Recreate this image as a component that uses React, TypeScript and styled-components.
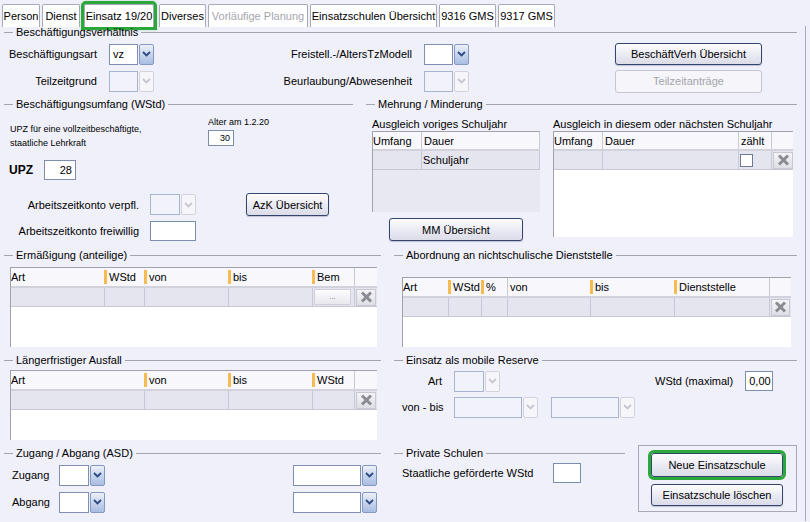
import React from "react";
import styled, { createGlobalStyle, css } from "styled-components";

const GlobalStyle = createGlobalStyle`
  html, body { margin: 0; padding: 0; background: #f0f0fa; }
  body { font-family: "Liberation Sans", Arial, sans-serif; font-size: 11px; color: #000; }
  * { box-sizing: border-box; }
`;

const Window = styled.div`
  width: 810px;
  height: 522px;
  overflow: hidden;
  background: #f0f0fa;
`;

/* ---------- tabs ---------- */

const TabBar = styled.div`
  display: flex;
  align-items: flex-end;
  gap: 2px;
  height: 27px;
  padding: 4px 0 0 2px;
`;

const Tab = styled.div<{ $w: number; $active?: boolean; $disabled?: boolean }>`
  width: ${(p) => p.$w}px;
  height: 23px;
  flex-shrink: 0;
  display: flex;
  align-items: center;
  justify-content: center;
  white-space: nowrap;
  background: #fff;
  border: 1px solid #a9a9b8;
  border-bottom: none;
  border-radius: 2px 2px 0 0;
  color: ${(p) => (p.$disabled ? "#a6a6ae" : "#000")};
  ${(p) =>
    p.$active &&
    css`
      margin: 0 3px 0 2px;
      outline: 3px solid #2aa83a;
      box-shadow: 0 0 3px 3px rgba(40, 160, 60, 0.25);
    `}
`;

/* ---------- panel & groups ---------- */

const Panel = styled.div`
  width: 806px;
  height: 495px;
  border-right: 1px solid #a9a9b8;
  padding: 0 8px 0 4px;
`;

const Section = styled.section<{ $mt?: number; $w?: number }>`
  margin-top: ${(p) => p.$mt ?? 0}px;
  ${(p) => (p.$w ? `width: ${p.$w}px; flex-shrink: 0;` : "flex: 1;")}
`;

const GroupHead = styled.div<{ $mt?: number }>`
  display: flex;
  align-items: center;
  gap: 3px;
  height: 12px;
  line-height: 12px;
  margin-top: ${(p) => p.$mt ?? 0}px;
  white-space: nowrap;
  &::before {
    content: "";
    width: 9px;
    height: 1px;
    background: #a4a4ae;
  }
  &::after {
    content: "";
    flex: 1;
    height: 1px;
    background: #a4a4ae;
  }
`;

const Label = styled.span<{ $right?: boolean }>`
  white-space: nowrap;
  text-align: ${(p) => (p.$right ? "right" : "left")};
`;

/* ---------- controls ---------- */

const ComboWrap = styled.div`
  display: flex;
  gap: 1px;
  height: 21px;
`;

const ComboBox = styled.div<{ $w: number; $disabled?: boolean }>`
  width: ${(p) => p.$w}px;
  height: 100%;
  display: flex;
  align-items: center;
  padding-left: 3px;
  background: ${(p) => (p.$disabled ? "#f2f2fb" : "#fff")};
  border: 1px solid ${(p) => (p.$disabled ? "#a9b5cf" : "#7f8eb2")};
`;

const ComboBtn = styled.div<{ $disabled?: boolean }>`
  width: 15px;
  height: 100%;
  display: flex;
  align-items: center;
  justify-content: center;
  border-radius: 2px;
  border: 1px solid ${(p) => (p.$disabled ? "#d2d2dc" : "#8399c4")};
  background: ${(p) =>
    p.$disabled ? "#f6f6fa" : "linear-gradient(#edf1fa, #c4d2ec 55%, #aabee3)"};
`;

function Combo({ w, value, disabled }: { w: number; value?: string; disabled?: boolean }) {
  return (
    <ComboWrap>
      <ComboBox $w={w} $disabled={disabled}>{value}</ComboBox>
      <ComboBtn $disabled={disabled}>
        <svg width="9" height="6" viewBox="0 0 9 6">
          <path
            d="M1 1 L4.5 4.5 L8 1"
            fill="none"
            stroke={disabled ? "#c6c6d0" : "#2b4a82"}
            strokeWidth="1.8"
          />
        </svg>
      </ComboBtn>
    </ComboWrap>
  );
}

const Field = styled.div<{ $w: number; $h: number; $right?: boolean }>`
  width: ${(p) => p.$w}px;
  height: ${(p) => p.$h}px;
  display: flex;
  align-items: center;
  justify-content: ${(p) => (p.$right ? "flex-end" : "flex-start")};
  padding: 0 3px;
  background: #fff;
  border: 1px solid #7d8db0;
`;

const Btn = styled.button<{ $w: number; $h: number; $marked?: boolean }>`
  width: ${(p) => p.$w}px;
  height: ${(p) => p.$h}px;
  padding: 0;
  font-family: inherit;
  font-size: 11px;
  color: #000;
  border: 1px solid #34446c;
  border-radius: 3px;
  background: linear-gradient(#fdfdff, #ebebf4 50%, #dcdce8);
  box-shadow: 0 1px 1px rgba(40, 50, 90, 0.25);
  &:disabled {
    color: #a4a4ac;
    border-color: #c6c6d2;
    background: #f5f5fa;
    box-shadow: none;
  }
  ${(p) =>
    p.$marked &&
    css`
      outline: 3px solid #2aa83a;
      outline-offset: 0;
    `}
`;

const XBtn = styled.div`
  width: 20px;
  height: 17px;
  display: flex;
  align-items: center;
  justify-content: center;
  border: 1px solid #c8c8d2;
  background: linear-gradient(#f4f4f8, #dedee6);
`;

function XButton() {
  return (
    <XBtn>
      <svg width="13" height="12" viewBox="0 0 13 12">
        <path d="M2 1.5 L11 10.5 M11 1.5 L2 10.5" stroke="#8b8b93" strokeWidth="3" />
      </svg>
    </XBtn>
  );
}

const DotsBtn = styled.div`
  width: 37px;
  height: 16px;
  display: flex;
  align-items: flex-end;
  justify-content: center;
  padding-bottom: 3px;
  font-size: 8px;
  color: #777;
  border: 1px solid #cfcfd8;
  background: linear-gradient(#fcfcfe, #e8e8ee);
`;

const Check = styled.div`
  width: 13px;
  height: 13px;
  background: #fff;
  border: 1px solid #6c7b9a;
`;

/* ---------- tables ---------- */

type Col = { label: string; w: number; sep?: "o" | "g" };

const TableBox = styled.div<{ $w: number; $h: number; $grey?: boolean }>`
  width: ${(p) => p.$w}px;
  height: ${(p) => p.$h}px;
  overflow: hidden;
  border-top: 1px solid #a2a2ac;
  border-left: 1px solid #a2a2ac;
  background: ${(p) => (p.$grey ? "#e8e8f0" : "#fff")};
`;

const HeadRow = styled.div<{ $h: number }>`
  display: flex;
  height: ${(p) => p.$h}px;
  background: #f7f7fc;
  border-bottom: 2px solid #d2d2dc;
`;

const HeadCell = styled.div<{ $w: number }>`
  width: ${(p) => p.$w}px;
  flex-shrink: 0;
  display: flex;
  align-items: center;
  white-space: nowrap;
  overflow: hidden;
`;

const Sep = styled.span<{ $kind: "o" | "g" }>`
  flex-shrink: 0;
  margin-right: 2px;
  ${(p) =>
    p.$kind === "o"
      ? css`
          width: 3px;
          height: 14px;
          background: #f7bb52;
        `
      : css`
          width: 1px;
          height: 100%;
          background: #cacad4;
        `}
`;

const DataRow = styled.div`
  display: flex;
  height: 19px;
  background: #e5e5ef;
  border-bottom: 1px solid #c8c8d4;
`;

const DataCell = styled.div<{ $w: number; $first?: boolean }>`
  width: ${(p) => p.$w}px;
  flex-shrink: 0;
  display: flex;
  align-items: center;
  padding-left: 1px;
  border-left: ${(p) => (p.$first ? "none" : "1px solid #c8c8d4")};
`;

function DataTable({
  cols,
  row,
  width,
  height,
  head = 20,
  grey,
}: {
  cols: Col[];
  row: React.ReactNode[];
  width: number;
  height: number;
  head?: number;
  grey?: boolean;
}) {
  return (
    <TableBox $w={width} $h={height} $grey={grey}>
      <HeadRow $h={head}>
        {cols.map((c, i) => (
          <HeadCell key={i} $w={c.w}>
            {c.sep && <Sep $kind={c.sep} />}
            {c.label}
          </HeadCell>
        ))}
      </HeadRow>
      <DataRow>
        {cols.map((c, i) => (
          <DataCell key={i} $w={c.w} $first={i === 0}>
            {row[i]}
          </DataCell>
        ))}
      </DataRow>
    </TableBox>
  );
}

/* ---------- section layouts ---------- */

const TopGrid = styled.div`
  display: grid;
  grid-template-columns: 93px 45px 246px 45px 122px 147px;
  grid-auto-rows: 22px;
  column-gap: 12px;
  row-gap: 5px;
  align-items: center;
  margin-top: 5px;
`;

const MidRow = styled.div`
  display: flex;
  gap: 13px;
  margin-top: 6px;
`;

const InfoRow = styled.div`
  display: flex;
  margin-top: 6px;
`;

const SmallNote = styled.div`
  width: 198px;
  margin: 6px 0 0 6px;
  font-size: 9px;
  line-height: 14px;
`;

const AgeBlock = styled.div`
  display: flex;
  flex-direction: column;
  gap: 2px;
  font-size: 9px;
  line-height: 12px;
`;

const UpzRow = styled.div`
  display: flex;
  align-items: center;
  margin-top: 10px;
  padding-left: 5px;
`;

const UpzLabel = styled.span`
  width: 35px;
  font-size: 12px;
  font-weight: bold;
`;

const AzkGrid = styled.div`
  display: grid;
  grid-template-columns: 135px 85px 83px;
  grid-template-rows: 23px 20px;
  column-gap: 11px;
  row-gap: 5px;
  align-items: center;
  margin-top: 13px;
`;

const SubCols = styled.div`
  display: flex;
  gap: 13px;
  margin-top: 8px;
  padding-left: 6px;
`;

const SubCol = styled.div<{ $w: number }>`
  width: ${(p) => p.$w}px;
  display: flex;
  flex-direction: column;
  align-items: center;
`;

const SubHead = styled.div`
  align-self: flex-start;
  line-height: 12px;
  margin-bottom: 1px;
  white-space: nowrap;
`;

const Pair = styled.div<{ $mt: number }>`
  display: grid;
  grid-template-columns: 377px 403px;
  column-gap: 13px;
  margin-top: ${(p) => p.$mt}px;
`;

const TableSlot = styled.div<{ $mt: number; $pl: number }>`
  margin-top: ${(p) => p.$mt}px;
  padding-left: ${(p) => p.$pl}px;
`;

const ReserveGrid = styled.div`
  display: grid;
  grid-template-columns: 40px 1fr;
  grid-auto-rows: 20px;
  column-gap: 12px;
  row-gap: 6px;
  align-items: center;
  margin-top: 5px;
  padding-left: 8px;
`;

const Line = styled.div<{ $gap: number }>`
  display: flex;
  align-items: center;
  gap: ${(p) => p.$gap}px;
`;

const Push = styled.span<{ $ml: number }>`
  margin-left: ${(p) => p.$ml}px;
  white-space: nowrap;
`;

const AsdGrid = styled.div`
  display: grid;
  grid-template-columns: 47px 234px 84px;
  grid-auto-rows: 20px;
  row-gap: 7px;
  align-items: center;
  margin-top: 6px;
  padding-left: 8px;
`;

const BottomRight = styled.div`
  display: flex;
  gap: 13px;
`;

const PrivRow = styled.div`
  display: flex;
  align-items: center;
  margin-top: 4px;
  padding-left: 8px;
`;

const ActionBox = styled.div`
  width: 159px;
  height: 67px;
  flex-shrink: 0;
  display: flex;
  flex-direction: column;
  gap: 7px;
  padding: 7px 0 0 12px;
  border: 1px solid #a8a8b4;
`;

/* ---------- data ---------- */

const tabs = [
  { label: "Person", w: 38 },
  { label: "Dienst", w: 38 },
  { label: "Einsatz 19/20", w: 70, active: true },
  { label: "Diverses", w: 47 },
  { label: "Vorläufige Planung", w: 100, disabled: true },
  { label: "Einsatzschulen Übersicht", w: 127 },
  { label: "9316 GMS", w: 57 },
  { label: "9317 GMS", w: 57 },
];

const ermCols: Col[] = [
  { label: "Art", w: 93 },
  { label: "WStd", w: 40, sep: "o" },
  { label: "von", w: 84, sep: "o" },
  { label: "bis", w: 84, sep: "o" },
  { label: "Bem", w: 42, sep: "o" },
  { label: "", w: 22, sep: "g" },
];

const abordCols: Col[] = [
  { label: "Art", w: 45 },
  { label: "WStd", w: 33, sep: "o" },
  { label: "%", w: 26, sep: "o" },
  { label: "von", w: 83, sep: "g" },
  { label: "bis", w: 84, sep: "o" },
  { label: "Dienststelle", w: 95, sep: "o" },
  { label: "", w: 21, sep: "g" },
];

const ausfallCols: Col[] = [
  { label: "Art", w: 133 },
  { label: "von", w: 84, sep: "o" },
  { label: "bis", w: 84, sep: "o" },
  { label: "WStd", w: 42, sep: "o" },
  { label: "", w: 22, sep: "g" },
];

const voriges: Col[] = [
  { label: "Umfang", w: 48 },
  { label: "Dauer", w: 118, sep: "g" },
  { label: "", w: 1, sep: "g" },
];

const naechstes: Col[] = [
  { label: "Umfang", w: 48 },
  { label: "Dauer", w: 136, sep: "g" },
  { label: "zählt", w: 33, sep: "g" },
  { label: "", w: 22, sep: "g" },
];

export default function App() {
  return (
    <Window>
      <GlobalStyle />
      <TabBar>
        {tabs.map((t) => (
          <Tab key={t.label} $w={t.w} $active={t.active} $disabled={t.disabled}>
            {t.label}
          </Tab>
        ))}
      </TabBar>

      <Panel>
        {/* Beschäftigungsverhältnis */}
        <Section $mt={-1}>
          <GroupHead>Beschäftigungsverhältnis</GroupHead>
          <TopGrid>
            <Label $right>Beschäftigungsart</Label>
            <Combo w={30} value="vz" />
            <Label $right>Freistell.-/AltersTzModell</Label>
            <Combo w={30} />
            <span />
            <Btn $w={147} $h={22}>BeschäftVerh Übersicht</Btn>

            <Label $right>Teilzeitgrund</Label>
            <Combo w={30} disabled />
            <Label $right>Beurlaubung/Abwesenheit</Label>
            <Combo w={30} disabled />
            <span />
            <Btn $w={147} $h={23} disabled>Teilzeitanträge</Btn>
          </TopGrid>
        </Section>

        <MidRow>
          {/* Beschäftigungsumfang */}
          <Section $w={349}>
            <GroupHead>Beschäftigungsumfang (WStd)</GroupHead>
            <InfoRow>
              <SmallNote>
                UPZ für eine vollzeitbeschäftigte,
                <br />
                staatliche Lehrkraft
              </SmallNote>
              <AgeBlock>
                <span>Alter am 1.2.20</span>
                <Field $w={26} $h={16} $right>30</Field>
              </AgeBlock>
            </InfoRow>
            <UpzRow>
              <UpzLabel>UPZ</UpzLabel>
              <Field $w={32} $h={20} $right>28</Field>
            </UpzRow>
            <AzkGrid>
              <Label $right>Arbeitszeitkonto verpfl.</Label>
              <Combo w={30} disabled />
              <Btn $w={83} $h={23}>AzK Übersicht</Btn>
              <Label $right>Arbeitszeitkonto freiwillig</Label>
              <Field $w={46} $h={20} />
              <span />
            </AzkGrid>
          </Section>

          {/* Mehrung / Minderung */}
          <Section>
            <GroupHead>Mehrung / Minderung</GroupHead>
            <SubCols>
              <SubCol $w={168}>
                <SubHead>Ausgleich voriges Schuljahr</SubHead>
                <DataTable
                  cols={voriges}
                  row={[null, "Schuljahr", null]}
                  width={168}
                  height={81}
                  head={19}
                  grey
                />
                <Btn $w={134} $h={23} style={{ marginTop: 6 }}>MM Übersicht</Btn>
              </SubCol>
              <SubCol $w={240}>
                <SubHead>Ausgleich in diesem oder nächsten Schuljahr</SubHead>
                <DataTable
                  cols={naechstes}
                  row={[null, null, <Check key="c" />, <XButton key="x" />]}
                  width={240}
                  height={106}
                  head={19}
                />
              </SubCol>
            </SubCols>
          </Section>
        </MidRow>

        <Pair $mt={8}>
          <Section>
            <GroupHead>Ermäßigung (anteilige)</GroupHead>
            <TableSlot $mt={6} $pl={6}>
              <DataTable
                cols={ermCols}
                row={[null, null, null, null, <DotsBtn key="d">...</DotsBtn>, <XButton key="x" />]}
                width={367}
                height={80}
              />
            </TableSlot>
          </Section>
          <Section>
            <GroupHead>Abordnung an nichtschulische Dienststelle</GroupHead>
            <TableSlot $mt={16} $pl={8}>
              <DataTable
                cols={abordCols}
                row={[null, null, null, null, null, null, <XButton key="x" />]}
                width={389}
                height={70}
              />
            </TableSlot>
          </Section>
        </Pair>

        <Pair $mt={7}>
          <Section>
            <GroupHead>Längerfristiger Ausfall</GroupHead>
            <TableSlot $mt={4} $pl={6}>
              <DataTable
                cols={ausfallCols}
                row={[null, null, null, null, <XButton key="x" />]}
                width={367}
                height={70}
              />
            </TableSlot>
          </Section>
          <Section>
            <GroupHead>Einsatz als mobile Reserve</GroupHead>
            <ReserveGrid>
              <Label $right>Art</Label>
              <Line $gap={12}>
                <Combo w={30} disabled />
                <Push $ml={143}>WStd (maximal)</Push>
                <Field $w={28} $h={20}>0,00</Field>
              </Line>
              <Label $right>von - bis</Label>
              <Line $gap={13}>
                <Combo w={68} disabled />
                <Combo w={68} disabled />
              </Line>
            </ReserveGrid>
          </Section>
        </Pair>

        <Pair $mt={5}>
          <Section>
            <GroupHead $mt={2}>Zugang / Abgang (ASD)</GroupHead>
            <AsdGrid>
              <Label>Zugang</Label>
              <Combo w={30} />
              <Combo w={68} />
              <Label>Abgang</Label>
              <Combo w={30} />
              <Combo w={68} />
            </AsdGrid>
          </Section>
          <BottomRight>
            <Section $w={231}>
              <GroupHead $mt={2}>Private Schulen</GroupHead>
              <PrivRow>
                <Label style={{ width: 151 }}>Staatliche geförderte WStd</Label>
                <Field $w={28} $h={20} />
              </PrivRow>
            </Section>
            <ActionBox>
              <Btn $w={132} $h={24} $marked>Neue Einsatzschule</Btn>
              <Btn $w={132} $h={22}>Einsatzschule löschen</Btn>
            </ActionBox>
          </BottomRight>
        </Pair>
      </Panel>
    </Window>
  );
}
